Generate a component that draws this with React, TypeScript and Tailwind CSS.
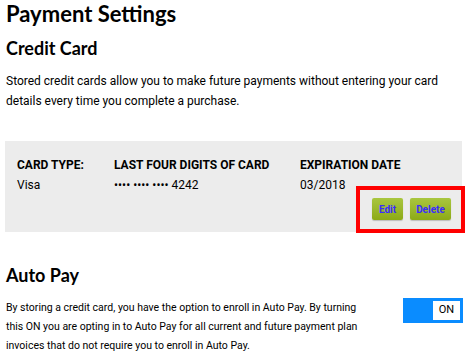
export default function App() {
  return (
    <div className="w-[473px] h-[353px] overflow-hidden bg-white px-[5px] text-black" style={{ fontFamily: 'Roboto, "Liberation Sans", sans-serif' }}>
      {/* Page title */}
      <h1 className="pl-px pt-[1px] text-[22px] leading-[26px] font-bold" style={{ fontFamily: 'Lato, "Open Sans", sans-serif' }}>
        Payment Settings
      </h1>

      {/* Credit card section */}
      <h2 className="mt-[10px] pl-px text-[18px] leading-[22px] font-bold" style={{ fontFamily: 'Lato, "Open Sans", sans-serif' }}>
        Credit Card
      </h2>
      <p className="mt-[12px] pl-px text-[12px] leading-[20px]">
        Stored credit cards allow you to make future payments without entering your card details every time you complete a purchase.
      </p>

      <div className="mt-[30px] h-[91px] w-[457px] bg-[#ececec] px-[12px] pt-[14px]">
        <div className="grid grid-cols-[97px_186px_1fr] text-[12px] leading-[20px]">
          <div className="font-bold">CARD TYPE:</div>
          <div className="font-bold">LAST FOUR DIGITS OF CARD</div>
          <div className="font-bold">EXPIRATION DATE</div>
          <div>Visa</div>
          <div>•••• •••• •••• 4242</div>
          <div>03/2018</div>
        </div>
        <div className="flex justify-end">
          <div className="-mr-[15px] mt-[-9px] flex h-[47px] w-[109px] items-start gap-[7px] border-4 border-[#ff0000] pl-[12px] pt-[8px]">
            <button className="h-[22px] w-[31px] rounded-[2px] bg-gradient-to-b from-[#a9c63e] to-[#8daa14] text-[10px] font-bold text-[#3a2cff] shadow-[0_1px_1px_rgba(0,0,0,0.2)]">
              Edit
            </button>
            <button className="h-[22px] w-[41px] rounded-[2px] bg-gradient-to-b from-[#a9c63e] to-[#8daa14] text-[10px] font-bold text-[#3a2cff] shadow-[0_1px_1px_rgba(0,0,0,0.2)]">
              Delete
            </button>
          </div>
        </div>
      </div>

      {/* Auto pay */}
      <h2 className="mt-[32px] pl-px text-[18px] leading-[22px] font-bold" style={{ fontFamily: 'Lato, "Open Sans", sans-serif' }}>
        Auto Pay
      </h2>
      <div className="mt-[12px] flex items-start justify-between">
        <p className="w-[358px] pl-px text-[10.5px] leading-[19px]">
          By storing a credit card, you have the option to enroll in Auto Pay. By turning this ON you are opting in to Auto Pay for all current and future payment plan invoices that do not require you to enroll in Auto Pay.
        </p>
        <div className="mr-[5px] flex h-[25px] w-[60px] justify-end bg-[#0a8cff] p-[3px]">
          <div className="flex h-[19px] w-[27px] items-center justify-center bg-white text-[11px]">ON</div>
        </div>
      </div>
    </div>
  );
}
